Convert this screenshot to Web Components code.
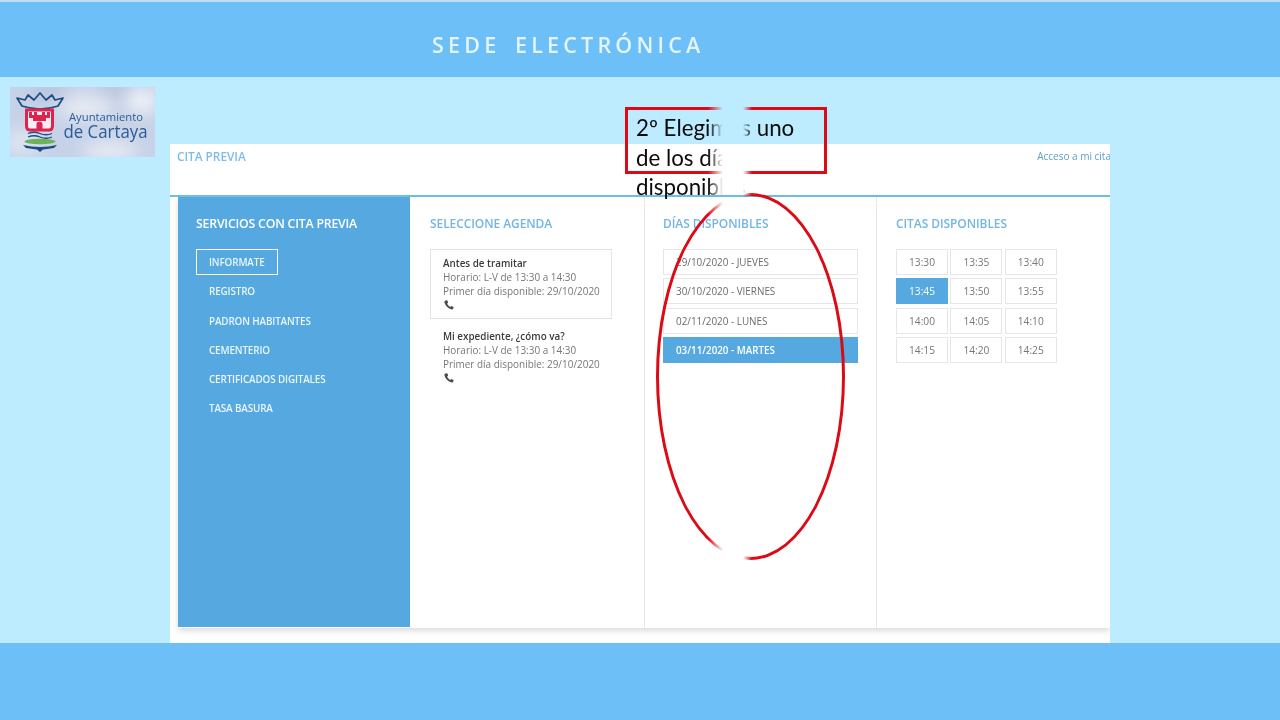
<!DOCTYPE html>
<html lang="es">
<head>
<meta charset="utf-8">
<title>Sede Electrónica - Cita previa</title>
<style>
  html,body{margin:0;padding:0;width:1280px;height:720px;overflow:hidden;background:#BDEBFF;font-family:"Open Sans",sans-serif}
  body{position:relative}
</style>
</head>
<body>
<x-page>
  <x-band slot="top" heading="SEDE ELECTRÓNICA"></x-band>
  <x-logo slot="logo"></x-logo>
  <x-card slot="card" title-text="CITA PREVIA" link-text="Acceso a mi cita">
    <x-side heading="SERVICIOS CON CITA PREVIA">
      <x-menu-item active>INFORMATE</x-menu-item>
      <x-menu-item>REGISTRO</x-menu-item>
      <x-menu-item>PADRON HABITANTES</x-menu-item>
      <x-menu-item>CEMENTERIO</x-menu-item>
      <x-menu-item>CERTIFICADOS DIGITALES</x-menu-item>
      <x-menu-item>TASA BASURA</x-menu-item>
    </x-side>
    <x-col heading="SELECCIONE AGENDA" first>
      <x-agenda selected name="Antes de tramitar"></x-agenda>
      <x-agenda name="Mi expediente, ¿cómo va?"></x-agenda>
    </x-col>
    <x-col heading="DÍAS DISPONIBLES">
      <x-day>29/10/2020 - JUEVES</x-day>
      <x-day>30/10/2020 - VIERNES</x-day>
      <x-day>02/11/2020 - LUNES</x-day>
      <x-day active>03/11/2020 - MARTES</x-day>
    </x-col>
    <x-col heading="CITAS DISPONIBLES" last>
      <x-slots>
        <x-slot-btn>13:30</x-slot-btn><x-slot-btn>13:35</x-slot-btn><x-slot-btn>13:40</x-slot-btn>
        <x-slot-btn active>13:45</x-slot-btn><x-slot-btn>13:50</x-slot-btn><x-slot-btn>13:55</x-slot-btn>
        <x-slot-btn>14:00</x-slot-btn><x-slot-btn>14:05</x-slot-btn><x-slot-btn>14:10</x-slot-btn>
        <x-slot-btn>14:15</x-slot-btn><x-slot-btn>14:20</x-slot-btn><x-slot-btn>14:25</x-slot-btn>
      </x-slots>
    </x-col>
  </x-card>
  <x-band slot="bottom"></x-band>
</x-page>
<x-callout>2º Elegimos uno de los días disponibles</x-callout>

<script>
function def(name, css, html){
  customElements.define(name, class extends HTMLElement{
    constructor(){
      super();
      const r=this.attachShadow({mode:'open'});
      r.innerHTML='<style>'+css+'</style>'+(typeof html==='function'?html(this):html);
    }
    connectedCallback(){
      if(typeof html==='function'){
        this.shadowRoot.innerHTML='<style>'+css+'</style>'+html(this);
      }
    }
  });
}

def('x-page',`
  :host{display:flex;flex-direction:column;width:1280px;height:720px;background:#BDEBFF}
  .main{flex:1;display:flex;align-items:flex-start;padding-left:10px;min-height:0}
  .logo{display:block;margin-top:10px;flex:none}
  .card{display:block;margin-left:15px;margin-top:67px;flex:none}
`,`
  <slot name="top"></slot>
  <div class="main">
    <div class="logo"><slot name="logo"></slot></div>
    <div class="card"><slot name="card"></slot></div>
  </div>
  <slot name="bottom"></slot>
`);

def('x-band',`
  :host{display:flex;box-sizing:border-box;height:77px;background:#6CBFF7;align-items:center;padding-left:432px}
  :host([slot=top]){border-top:2px solid #BFDDF3;padding-top:10px}
  h1{margin:0;font:600 21.500px/1 "Open Sans",sans-serif;letter-spacing:4.200px;word-spacing:4.800px;color:#E4F4FD;white-space:nowrap;filter:blur(.5px)}
`, el=>{
  const h=el.getAttribute('heading');
  return h?`<h1>${h}</h1>`:'';
});

def('x-logo',`
  :host{display:block;width:145px;height:70px}
  svg{display:block;filter:blur(.35px)}
  text{font-family:"Open Sans",sans-serif;fill:#2B5B96}
`,`
<svg width="145" height="70" viewBox="0 0 145 70" xmlns="http://www.w3.org/2000/svg">
  <defs>
    <filter id="c" x="-30%" y="-30%" width="160%" height="160%"><feGaussianBlur stdDeviation="8"/></filter>
    <clipPath id="k"><rect width="145" height="70"/></clipPath>
  </defs>
  <g clip-path="url(#k)">
    <rect width="145" height="70" fill="#C6D2E7"/>
    <g filter="url(#c)">
      <ellipse cx="75" cy="20" rx="28" ry="12" fill="#E6EAF3"/>
      <ellipse cx="132" cy="14" rx="16" ry="13" fill="#EEF1F7"/>
      <ellipse cx="12" cy="55" rx="20" ry="13" fill="#DDE4F0"/>
      <ellipse cx="100" cy="64" rx="28" ry="10" fill="#E6EBF4"/>
      <ellipse cx="40" cy="6" rx="20" ry="7" fill="#B0C0DC"/>
      <ellipse cx="105" cy="2" rx="18" ry="5" fill="#ADBCD8"/>
    </g>
    <path d="M7 11L12 19Q30 25 48 19L53 11L45 13L42 8L36 13L30 6L24 13L18 8L15 13Z" fill="none" stroke="#1F4A82" stroke-width="1.700" stroke-linejoin="round"/>
    <path d="M16.500 23H42.500V39Q42.500 43 39 43H20Q16.500 43 16.500 39Z" fill="#F6EEF2" stroke="#E0224E" stroke-width="3"/>
    <path d="M19 25H22V28H24V25H27V28H32V25H35V28H37V25H40V31H36V34H23V31H19Z" fill="#E0224E"/>
    <path d="M26.500 42V37.500A3 3 0 0 1 32.500 37.500V42Z" fill="#E0224E"/>
    <path d="M18 46.500Q24 44 30 46.500T42 46.500" fill="none" stroke="#1F4A82" stroke-width="1.300"/>
    <path d="M18 50Q24 47.500 30 50T42 50" fill="none" stroke="#1F4A82" stroke-width="1.300"/>
    <ellipse cx="30" cy="54.500" rx="15.500" ry="2.800" fill="#6EB35A"/>
    <path d="M13 58Q30 62 47 58L44 61Q36 62 33 62.500L30 65L27 62.500Q24 62 16 61Z" fill="#1F4A82"/>
    <text x="59" y="33.500" font-size="11.400" textLength="74" lengthAdjust="spacingAndGlyphs">Ayuntamiento</text>
    <text x="53.500" y="50.500" font-size="18.500" textLength="84" lengthAdjust="spacingAndGlyphs">de Cartaya</text>
  </g>
</svg>
`);

def('x-card',`
  :host{display:block;box-sizing:border-box;width:940px;height:499px;background:#fff;overflow:hidden;position:relative;color:#555}
  .head{display:flex;justify-content:space-between;align-items:flex-start;height:51px;box-sizing:border-box;padding:4px 0 0 7px;filter:blur(.3px)}
  .t{font:600 11.800px/16px "Open Sans",sans-serif;color:#7DBCE6}
  .l{font:400 10px/16px "Open Sans",sans-serif;color:#5C9FC8;margin-right:-1px}
  .rule{height:2px;background:#6FC0E2}
  .body{display:grid;grid-template-columns:232px 234px 232px 234px;margin-left:8px;height:431px;box-shadow:0 3px 6px rgba(0,0,0,.14)}
`, el=>`
  <div class="head"><div class="t">${el.getAttribute('title-text')}</div><div class="l">${el.getAttribute('link-text')}</div></div>
  <div class="rule"></div>
  <div class="body"><slot></slot></div>
`);

def('x-side',`
  :host{display:block;box-sizing:border-box;background:#55A9E0;padding:18px 0 0 18px;color:#fff;height:430px}
  h2{margin:0 0 17px;font:600 12.300px/17px "Open Sans",sans-serif;letter-spacing:-.2px;white-space:nowrap;filter:blur(.3px)}
  .m{display:flex;flex-direction:column;gap:3.300px;align-items:flex-start}
`, el=>`<h2>${el.getAttribute('heading')}</h2><div class="m"><slot></slot></div>`);

def('x-menu-item',`
  :host{display:block;box-sizing:border-box;height:26px;padding:0 12px;border:1px solid transparent;font:600 9.900px/24px "Open Sans",sans-serif;color:#EAF5FC;white-space:nowrap;letter-spacing:-.14px;filter:blur(.25px)}
  :host([active]){border-color:#fff}
`,`<slot></slot>`);

def('x-col',`
  :host{display:block;box-sizing:border-box;padding:18px 18px 0 18px;border-left:1px solid #E8E8E8;height:431px}
  :host([first]){border-left:0;padding-left:20px;padding-right:32px}
  :host([last]){padding-left:19px}
  h3{margin:0 0 17px;font:600 12px/17px "Open Sans",sans-serif;color:#74B6E2;letter-spacing:-.08px;white-space:nowrap;filter:blur(.3px)}
  .c{display:flex;flex-direction:column;gap:3.400px}
`, el=>`<h3>${el.getAttribute('heading')}</h3><div class="c"><slot></slot></div>`);

def('x-agenda',`
  :host{display:block;box-sizing:border-box;height:70px;padding:6px 12px 0;border:1px solid transparent;font:400 9.950px/14px "Open Sans",sans-serif;color:#777;white-space:nowrap;filter:blur(.25px)}
  :host([selected]){border-color:#E4E4E4}
  .n{color:#3b3b3b;font-weight:600;font-size:9.850px}
  svg{display:block;margin:2px 0 0 1px}
`, el=>`
  <div class="n">${el.getAttribute('name')}</div>
  <div>Horario: L-V de 13:30 a 14:30</div>
  <div>Primer día disponible: 29/10/2020</div>
  <svg width="10" height="10" viewBox="0 0 10 10"><path d="M1.600.6L3.300 .3 4.200 2.700 3.100 3.600C3.600 5 4.800 6.300 6.300 7L7.300 5.900 9.600 7 9.300 8.600C9.100 9.300 8.600 9.600 7.900 9.500 4.400 9 1 5.700.4 2.100.3 1.400.8.800 1.600.6Z" fill="#4a4a4a"/></svg>
`);

def('x-day',`
  :host{display:block;box-sizing:border-box;height:26px;padding:0 12px;border:1px solid #E6E6E6;font:400 9.900px/24px "Open Sans",sans-serif;color:#6b6b6b;background:#fff;white-space:nowrap;filter:blur(.25px)}
  :host([active]){background:#55A9E0;border-color:#55A9E0;color:#fff;font-weight:600;font-size:9.800px;line-height:25px}
`,`<slot></slot>`);

def('x-slots',`
  :host{display:grid;grid-template-columns:52px 52px 52px;column-gap:2.400px;row-gap:3.400px;justify-content:start}
`,`<slot></slot>`);

def('x-slot-btn',`
  :host{display:block;box-sizing:border-box;height:26px;border:1px solid #E6E6E6;font:400 10.200px/24px "Open Sans",sans-serif;color:#777;background:#fff;text-align:center;filter:blur(.25px)}
  :host([active]){background:#55A9E0;border-color:#55A9E0;color:#fff}
`,`<slot></slot>`);

def('x-callout',`
  :host{position:absolute;left:0;top:0;width:1280px;height:720px;pointer-events:none;
    -webkit-mask-image:linear-gradient(to right,#000 708px,transparent 723px,transparent 743px,#000 752px);
    mask-image:linear-gradient(to right,#000 708px,transparent 723px,transparent 743px,#000 752px)}
  .box{position:absolute;left:625px;top:107px;width:202px;height:67px;box-sizing:border-box;border:3px solid #DC0A14;padding:3.400px 8px;font:400 22.300px/29.300px Lato,"Open Sans",sans-serif;color:#0b0b0b}
  .el{position:absolute;left:656px;top:193px;width:189px;height:367px;box-sizing:border-box;border:3px solid #DC0A14;border-radius:50%}
`,`<div class="box"><slot></slot></div><div class="el"></div>`);
</script>
</body>
</html>
